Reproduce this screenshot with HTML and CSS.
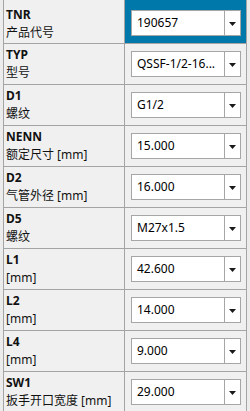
FILE: index.html
```html
<!DOCTYPE html>
<html>
<head>
<meta charset="utf-8">
<link rel="stylesheet" href="styles.css">
</head>
<body>
<div class="page">
  <div class="grid">
    <div class="label first"><b>TNR</b><span>产品代号</span></div>
    <div class="value first active"><div class="combo"><span class="text">190657</span><span class="btn"><svg width="7" height="4" viewBox="0 0 7 4"><polygon points="0,0 7,0 3.5,4" fill="#1a1a1a"/></svg></span></div></div>

    <div class="label"><b>TYP</b><span>型号</span></div>
    <div class="value"><div class="combo"><span class="text">QSSF-1/2-16...</span><span class="btn"><svg width="7" height="4" viewBox="0 0 7 4"><polygon points="0,0 7,0 3.5,4" fill="#1a1a1a"/></svg></span></div></div>

    <div class="label"><b>D1</b><span>螺纹</span></div>
    <div class="value"><div class="combo"><span class="text">G1/2</span><span class="btn"><svg width="7" height="4" viewBox="0 0 7 4"><polygon points="0,0 7,0 3.5,4" fill="#1a1a1a"/></svg></span></div></div>

    <div class="label"><b>NENN</b><span>额定尺寸 [mm]</span></div>
    <div class="value"><div class="combo"><span class="text">15.000</span><span class="btn"><svg width="7" height="4" viewBox="0 0 7 4"><polygon points="0,0 7,0 3.5,4" fill="#1a1a1a"/></svg></span></div></div>

    <div class="label"><b>D2</b><span>气管外径 [mm]</span></div>
    <div class="value"><div class="combo"><span class="text">16.000</span><span class="btn"><svg width="7" height="4" viewBox="0 0 7 4"><polygon points="0,0 7,0 3.5,4" fill="#1a1a1a"/></svg></span></div></div>

    <div class="label"><b>D5</b><span>螺纹</span></div>
    <div class="value"><div class="combo"><span class="text">M27x1.5</span><span class="btn"><svg width="7" height="4" viewBox="0 0 7 4"><polygon points="0,0 7,0 3.5,4" fill="#1a1a1a"/></svg></span></div></div>

    <div class="label"><b>L1</b><span>[mm]</span></div>
    <div class="value"><div class="combo"><span class="text">42.600</span><span class="btn"><svg width="7" height="4" viewBox="0 0 7 4"><polygon points="0,0 7,0 3.5,4" fill="#1a1a1a"/></svg></span></div></div>

    <div class="label"><b>L2</b><span>[mm]</span></div>
    <div class="value"><div class="combo"><span class="text">14.000</span><span class="btn"><svg width="7" height="4" viewBox="0 0 7 4"><polygon points="0,0 7,0 3.5,4" fill="#1a1a1a"/></svg></span></div></div>

    <div class="label"><b>L4</b><span>[mm]</span></div>
    <div class="value"><div class="combo"><span class="text">9.000</span><span class="btn"><svg width="7" height="4" viewBox="0 0 7 4"><polygon points="0,0 7,0 3.5,4" fill="#1a1a1a"/></svg></span></div></div>

    <div class="label"><b>SW1</b><span>扳手开口宽度 [mm]</span></div>
    <div class="value"><div class="combo"><span class="text">29.000</span><span class="btn"><svg width="7" height="4" viewBox="0 0 7 4"><polygon points="0,0 7,0 3.5,4" fill="#1a1a1a"/></svg></span></div></div>
  </div>
</div>
</body>
</html>
```
FILE: styles.css
```css
html, body {
  margin: 0;
  padding: 0;
  background: #ececec;
}
body {
  font-family: "Noto Sans", "Noto Sans CJK SC", sans-serif;
  font-size: 12px;
  color: #111;
  overflow: hidden;
}
.page {
  width: 250px;
  height: 411px;
  overflow: hidden;
  padding-left: 3px;
  box-sizing: border-box;
}
.grid {
  display: grid;
  width: 244px;
  grid-template-columns: 120px 121px;
  grid-template-rows: 43px repeat(9, 40px);
  column-gap: 1px;
  row-gap: 1px;
  padding: 0 1px;
  box-sizing: border-box;
  background: #a4a4a4;
}
.label {
  background: #f0f0f0;
  display: flex;
  flex-direction: column;
  padding: 3px 0 0 2px;
  white-space: nowrap;
}
.label b {
  font-weight: 700;
  line-height: 16px;
}
.label span {
  line-height: 18px;
  margin-top: 1px;
}
.label.first {
  padding-top: 7px;
}
.value {
  background: #f0f0f0;
  display: flex;
  align-items: center;
  padding: 0 5px 0 6px;
}
.value.first {
  padding-top: 3px;
}
.value.active {
  background: #0078aa;
}
.combo {
  flex: 1;
  height: 26px;
  box-sizing: border-box;
  border: 1px solid #a6a6a6;
  background: #fff;
  display: flex;
  align-items: stretch;
}
.combo .text {
  flex: 1;
  padding-left: 5px;
  line-height: 24px;
  font-size: 12px;
  color: #000;
  white-space: nowrap;
  overflow: hidden;
}
.combo .btn {
  width: 16px;
  border-left: 1px solid #a6a6a6;
  display: flex;
  align-items: center;
  justify-content: center;
  padding-top: 2px;
  box-sizing: border-box;
}
.combo .btn svg {
  display: block;
}
```
